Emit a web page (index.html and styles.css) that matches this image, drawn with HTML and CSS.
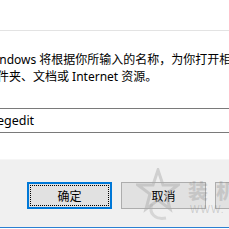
FILE: index.html
```html
<!DOCTYPE html>
<html>
<head>
<meta charset="utf-8">
<link rel="stylesheet" href="styles.css">
</head>
<body>
<div class="dialog">
  <div class="titlebar"></div>
  <div class="body">
    <div class="desc">
      <div class="line">Windows 将根据你所输入的名称，为你打开相应的程序、</div>
      <div class="line">文件夹、文档或 Internet 资源。</div>
    </div>
    <div class="combo">regedit</div>
  </div>
  <div class="footer">
    <button class="btn primary"><span class="focus">确定</span></button>
    <button class="btn">取消</button>
    <button class="btn">浏览(B)...</button>
  </div>
  <div class="accent"></div>
  <div class="watermark">
    <svg class="star" width="44" height="54" viewBox="0 0 44 54">
      <path d="M22 2 L27 17 L42 17 L30 26 L34 41 L22 32 L10 41 L14 26 L2 17 L17 17 Z" fill="none" stroke="#a8a8a8" stroke-width="3" opacity="0.45"/>
      <path d="M16 36 C 12 46, 20 52, 30 50" fill="none" stroke="#b0b0b0" stroke-width="3" opacity="0.4"/>
    </svg>
    <span class="wm-text">装机</span>
    <span class="wm-url">WWW.</span>
  </div>
</div>
</body>
</html>
```

FILE: styles.css
```css
html, body {
  margin: 0;
  padding: 0;
  width: 229px;
  height: 229px;
  overflow: hidden;
  background: #ffffff;
}
.dialog {
  position: relative;
  width: 229px;
  height: 229px;
  overflow: hidden;
  font-family: "Noto Sans", "Noto Sans CJK SC", sans-serif;
  font-size: 12px;
  color: #000;
}
.titlebar {
  height: 30px;
  border-bottom: 1px solid #e3e3e3;
  background: #fff;
}
.body {
  height: 128px;
  background: #fff;
  display: flex;
  flex-direction: column;
}
.desc {
  margin-top: 20px;
  margin-left: -15px;
  white-space: nowrap;
  font-size: 12px;
  text-spacing-trim: space-all;
}
.line {
  height: 17px;
  line-height: 17px;
}
.latin {
  letter-spacing: 0.3px;
}
.combo {
  margin-top: 23px;
  margin-left: -40px;
  width: 320px;
  height: 23px;
  border: 1px solid #7a7a7a;
  line-height: 23px;
  padding-left: 31px;
  box-sizing: content-box;
  white-space: nowrap;
  font-size: 12.5px;
}
.footer {
  height: 68px;
  background: #f0f0f0;
  border-top: 1px solid #f6f6f6;
  box-sizing: border-box;
  display: flex;
  gap: 9px;
  padding-left: 27px;
  padding-top: 22px;
  white-space: nowrap;
}
.btn {
  flex: none;
  width: 85px;
  height: 27px;
  margin: 0;
  padding: 0;
  background: #e1e1e1;
  border: 1px solid #adadad;
  font-family: "Noto Sans CJK SC", sans-serif;
  font-size: 12px;
  color: #000;
  display: flex;
  align-items: center;
  justify-content: center;
}
.btn.primary {
  border: 2px solid #0078d7;
  padding: 1px;
}
.focus {
  display: flex;
  align-items: center;
  justify-content: center;
  width: 100%;
  height: 100%;
  border: 1px dotted #000;
  box-sizing: border-box;
}
.accent {
  height: 1px;
  background: #2b7fd1;
}
.watermark {
  position: absolute;
  left: 136px;
  top: 168px;
  width: 100px;
  height: 56px;
  pointer-events: none;
  white-space: nowrap;
}
.star {
  position: absolute;
  left: 0;
  top: 0;
}
.wm-text {
  position: absolute;
  left: 52px;
  top: 8px;
  font-family: "Noto Sans CJK SC", sans-serif;
  font-weight: 900;
  font-size: 20px;
  letter-spacing: 8px;
  color: rgba(120, 120, 120, 0.25);
}
.wm-url {
  position: absolute;
  left: 54px;
  top: 36px;
  font-family: "Liberation Sans", sans-serif;
  font-size: 10px;
  letter-spacing: 1px;
  color: rgba(120, 120, 120, 0.3);
}
```
